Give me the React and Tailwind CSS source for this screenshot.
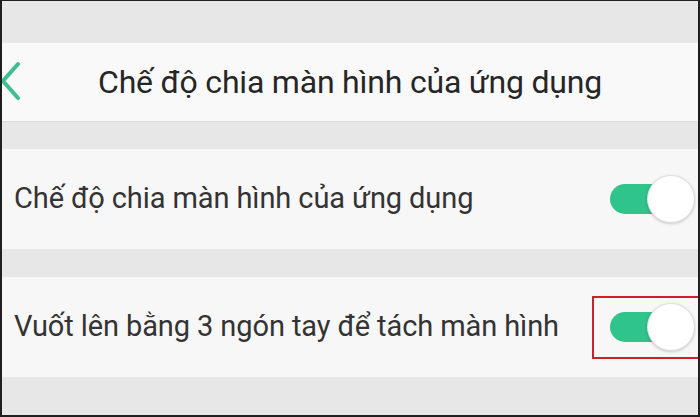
import React from 'react';

const Toggle = () => (
  <div className="relative w-[85px] h-[50px] flex items-center">
    <div className="w-[60px] h-[30px] rounded-full bg-[#2fc48c]" />
    <div className="absolute right-0 top-[1px] w-[48px] h-[48px] rounded-full bg-white border border-[#dedede] shadow-[0_1px_3px_rgba(0,0,0,0.18)]" />
  </div>
);

const SettingRow = ({ label, highlight }) => (
  <div className="relative h-[100px] bg-[#f7f7f7] flex items-center justify-between pl-[12px] pr-[3px]">
    <span className="text-[29px] text-[#333333] tracking-[-0.1px]">{label}</span>
    <Toggle />
    {highlight && (
      <div className="absolute left-[590px] top-[19px] w-[108px] h-[63px] border-2 border-[#cf1f2a]" />
    )}
  </div>
);

export default function App() {
  return (
    <div
      className="w-[700px] h-[417px] overflow-hidden bg-[#e7e7e7] border-t border-b-2 border-l-2 border-r-2 border-[#1f1f1f]"
      style={{ fontFamily: 'Roboto, "Noto Sans", sans-serif' }}
    >
      <div className="flex flex-col pt-[42px]">
        {/* Header */}
        <div className="relative h-[79px] bg-[#f9f9f9] border-b border-[#dcdcdc] flex items-center justify-center">
          <svg className="absolute left-[-2px] top-[18px]" width="24" height="40" viewBox="0 0 24 40">
            <polyline points="18,3 3,20 18,37" fill="none" stroke="#3cbf92" strokeWidth="4" strokeLinecap="round" strokeLinejoin="round" />
          </svg>
          <span className="text-[32px] text-[#262626] tracking-[-0.2px]">Chế độ chia màn hình của ứng dụng</span>
        </div>

        <div className="h-[27px]" />
        <SettingRow label="Chế độ chia màn hình của ứng dụng" />

        <div className="h-[28px]" />
        <SettingRow label="Vuốt lên bằng 3 ngón tay để tách màn hình" highlight />
      </div>
    </div>
  );
}
